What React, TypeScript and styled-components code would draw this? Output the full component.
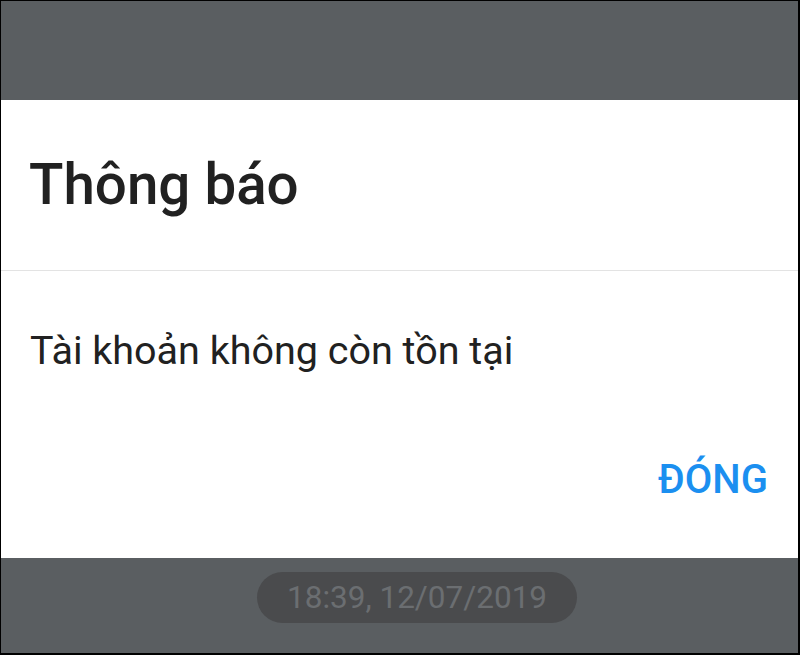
import styled, { createGlobalStyle } from "styled-components";

const GlobalStyle = createGlobalStyle`
    html, body {
        margin: 0;
        padding: 0;
        background: #000;
    }
    * {
        box-sizing: border-box;
    }
`

const Screen = styled.div`
    width: 800px;
    height: 655px;
    display: flex;
    flex-direction: column;
    background-color: #5a5e61;
    border-style: solid;
    border-color: #000;
    border-width: 1px 2px 2px 1px;
    padding-top: 99px;
    font-family: Roboto, "Noto Sans", sans-serif;
`

const Dialog = styled.section`
    display: flex;
    flex-direction: column;
    height: 458px;
    background-color: #ffffff;
`

const DialogHeader = styled.header`
    display: flex;
    align-items: center;
    height: 170px;
    padding-left: 28px;
`

const DialogTitle = styled.h1`
    margin: 0;
    font-size: 56.5px;
    font-weight: 500;
    color: #212121;
    line-height: 1;
`

const Divider = styled.hr`
    margin: 0;
    border: none;
    border-top: 1px solid #e3e3e3;
`

const DialogBody = styled.p`
    margin: 0;
    padding: 56px 30px 0 29px;
    font-size: 39.5px;
    line-height: 48px;
    color: #212121;
`

const ButtonRow = styled.div`
    display: flex;
    justify-content: flex-end;
    margin-top: 81px;
    padding-right: 30px;
`

const DialogButton = styled.button`
    border: none;
    background: none;
    padding: 0;
    font-family: inherit;
    font-size: 40px;
    line-height: 48px;
    font-weight: 500;
    color: #1b8ff0;
    cursor: pointer;
`

const Footer = styled.div`
    flex: 1;
    display: flex;
    align-items: flex-start;
    padding: 14px 0 0 256px;
`

const TimePill = styled.div`
    display: flex;
    align-items: center;
    height: 51px;
    padding: 0 30px;
    border-radius: 26px;
    background-color: #4a4b4d;
    color: #6b6e71;
    font-size: 31.5px;
`

function App() {
    return (
        <>
            <GlobalStyle />
            <Screen>
                <Dialog>
                    <DialogHeader>
                        <DialogTitle>Thông báo</DialogTitle>
                    </DialogHeader>
                    <Divider />
                    <DialogBody>Tài khoản không còn tồn tại</DialogBody>
                    <ButtonRow>
                        <DialogButton>ĐÓNG</DialogButton>
                    </ButtonRow>
                </Dialog>
                <Footer>
                    <TimePill>18:39, 12/07/2019</TimePill>
                </Footer>
            </Screen>
        </>
    )
}

export default App;
